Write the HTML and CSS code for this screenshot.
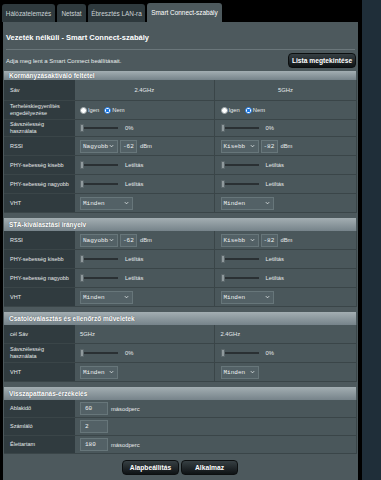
FILE: index.html
```html
<!DOCTYPE html>
<html lang="hu">
<head>
    <meta charset="UTF-8">
    <meta name="viewport" content="width=device-width, initial-scale=1.0">
    <title>Smart Connect-szabály</title>
    <link rel="stylesheet" href="styles.css">
</head>
<body>
<div class="layout">
    <div class="main">
        <div class="tabs">
            <div class="tab t1">Hálózatelemzés</div>
            <div class="tab t2">Netstat</div>
            <div class="tab t3">Ébresztés LAN-ra</div>
            <div class="tab t4 active">Smart Connect-szabály</div>
        </div>

        <div class="panel">
            <div class="title">Vezeték nélküli - Smart Connect-szabály</div>
            <div class="divider"></div>
            <div class="intro">
                <span class="desc">Adja meg lent a Smart Connect beállításait.</span>
                <button class="btn btn-list">Lista megtekintése</button>
            </div>

            <!-- Kormányzás -->
            <div class="section-head first">Kormányzásaktiváló feltétel</div>
            <table class="form">
                <colgroup><col class="c-label"><col class="c-a"><col class="c-b"></colgroup>
                <tr class="tall">
                    <th>Sáv</th>
                    <td class="center">2.4GHz</td>
                    <td class="center">5GHz</td>
                </tr>
                <tr>
                    <th>Terheléskiegyenlítés<br>engedélyezése</th>
                    <td><div class="cell"><span class="radio"></span><span class="rl">Igen</span><span class="radio on"></span><span class="rl">Nem</span></div></td>
                    <td><div class="cell"><span class="radio"></span><span class="rl">Igen</span><span class="radio on"></span><span class="rl">Nem</span></div></td>
                </tr>
                <tr class="short">
                    <th>Sávszélesség<br>használata</th>
                    <td><div class="cell"><span class="slider"><span class="knob"></span></span><span class="after">0%</span></div></td>
                    <td><div class="cell"><span class="slider"><span class="knob"></span></span><span class="after">0%</span></div></td>
                </tr>
                <tr>
                    <th>RSSI</th>
                    <td><div class="cell"><span class="select">Nagyobb<svg class="chev" viewBox="0 0 6 4"><path d="M1 1l2 2 2-2"/></svg></span><span class="field">-62</span><span class="unit">dBm</span></div></td>
                    <td><div class="cell"><span class="select">Kisebb<svg class="chev" viewBox="0 0 6 4"><path d="M1 1l2 2 2-2"/></svg></span><span class="field">-82</span><span class="unit">dBm</span></div></td>
                </tr>
                <tr>
                    <th>PHY-sebesség kisebb</th>
                    <td><div class="cell"><span class="slider"><span class="knob"></span></span><span class="after">Letiltás</span></div></td>
                    <td><div class="cell"><span class="slider"><span class="knob"></span></span><span class="after">Letiltás</span></div></td>
                </tr>
                <tr>
                    <th>PHY-sebesség nagyobb</th>
                    <td><div class="cell"><span class="slider"><span class="knob"></span></span><span class="after">Letiltás</span></div></td>
                    <td><div class="cell"><span class="slider"><span class="knob"></span></span><span class="after">Letiltás</span></div></td>
                </tr>
                <tr>
                    <th>VHT</th>
                    <td><div class="cell"><span class="select wide">Minden<svg class="chev" viewBox="0 0 6 4"><path d="M1 1l2 2 2-2"/></svg></span></div></td>
                    <td><div class="cell"><span class="select wide">Minden<svg class="chev" viewBox="0 0 6 4"><path d="M1 1l2 2 2-2"/></svg></span></div></td>
                </tr>
            </table>

            <!-- STA -->
            <div class="section-head">STA-kiválasztási irányelv</div>
            <table class="form">
                <colgroup><col class="c-label"><col class="c-a"><col class="c-b"></colgroup>
                <tr>
                    <th>RSSI</th>
                    <td><div class="cell"><span class="select">Nagyobb<svg class="chev" viewBox="0 0 6 4"><path d="M1 1l2 2 2-2"/></svg></span><span class="field">-62</span><span class="unit">dBm</span></div></td>
                    <td><div class="cell"><span class="select">Kisebb<svg class="chev" viewBox="0 0 6 4"><path d="M1 1l2 2 2-2"/></svg></span><span class="field">-82</span><span class="unit">dBm</span></div></td>
                </tr>
                <tr>
                    <th>PHY-sebesség kisebb</th>
                    <td><div class="cell"><span class="slider"><span class="knob"></span></span><span class="after">Letiltás</span></div></td>
                    <td><div class="cell"><span class="slider"><span class="knob"></span></span><span class="after">Letiltás</span></div></td>
                </tr>
                <tr>
                    <th>PHY-sebesség nagyobb</th>
                    <td><div class="cell"><span class="slider"><span class="knob"></span></span><span class="after">Letiltás</span></div></td>
                    <td><div class="cell"><span class="slider"><span class="knob"></span></span><span class="after">Letiltás</span></div></td>
                </tr>
                <tr>
                    <th>VHT</th>
                    <td><div class="cell"><span class="select wide">Minden<svg class="chev" viewBox="0 0 6 4"><path d="M1 1l2 2 2-2"/></svg></span></div></td>
                    <td><div class="cell"><span class="select wide">Minden<svg class="chev" viewBox="0 0 6 4"><path d="M1 1l2 2 2-2"/></svg></span></div></td>
                </tr>
            </table>

            <!-- Csatolóválasztás -->
            <div class="section-head">Csatolóválasztás és ellenőrző műveletek</div>
            <table class="form">
                <colgroup><col class="c-label"><col class="c-a"><col class="c-b"></colgroup>
                <tr>
                    <th>cél Sáv</th>
                    <td>5GHz</td>
                    <td>2.4GHz</td>
                </tr>
                <tr>
                    <th>Sávszélesség<br>használata</th>
                    <td><div class="cell"><span class="slider"><span class="knob"></span></span><span class="after">0%</span></div></td>
                    <td><div class="cell"><span class="slider"><span class="knob"></span></span><span class="after">0%</span></div></td>
                </tr>
                <tr>
                    <th>VHT</th>
                    <td><div class="cell"><span class="select">Minden<svg class="chev" viewBox="0 0 6 4"><path d="M1 1l2 2 2-2"/></svg></span></div></td>
                    <td><div class="cell"><span class="select">Minden<svg class="chev" viewBox="0 0 6 4"><path d="M1 1l2 2 2-2"/></svg></span></div></td>
                </tr>
            </table>

            <!-- Visszapattanás -->
            <div class="section-head">Visszapattanás-érzékelés</div>
            <table class="form compact last">
                <colgroup><col class="c-label"><col class="c-rest"></colgroup>
                <tr>
                    <th>Ablakidő</th>
                    <td><div class="cell"><span class="field long">60</span><span class="unit">másodperc</span></div></td>
                </tr>
                <tr>
                    <th>Számláló</th>
                    <td><div class="cell"><span class="field long">2</span></div></td>
                </tr>
                <tr>
                    <th>Élettartam</th>
                    <td><div class="cell"><span class="field long">180</span><span class="unit">másodperc</span></div></td>
                </tr>
            </table>

            <div class="actions">
                <button class="btn btn-action">Alapbeállítás</button>
                <button class="btn btn-action">Alkalmaz</button>
            </div>
        </div>
    </div>
    <div class="side"></div>
</div>
</body>
</html>
```

FILE: styles.css
```css
body { margin: 0; background: #000; font-family: "Liberation Sans", Arial, sans-serif; color: #eef1f2; }
.layout { display: flex; height: 480px; overflow: hidden; }
.main { width: 358px; flex: none; }
.side { flex: 1; margin-left: 4px; background: #1f2e39; }

/* tabs */
.tabs { display: flex; align-items: flex-end; gap: 2px; height: 22px; padding-left: 2px; box-sizing: border-box; }
.tab { height: 18px; display: flex; align-items: center; justify-content: center; background: #2e393d; color: #cdd4d6; font-size: 6.4px; border-radius: 3px 3px 0 0; }
.tab.active { height: 19px; background: #4d595d; color: #fff; }
.t1 { width: 53px; }
.t2 { width: 29px; }
.t3 { width: 57px; }
.t4 { width: 75px; }

/* panel */
.panel { margin-left: 3px; padding: 0 2px 0 1px; background: #4d595d; height: 458px; }
.title { padding: 11px 2px 0; height: 9px; line-height: 9px; font-size: 7.5px; font-weight: bold; color: #fff; }
.divider { margin: 7px 1px 0 2px; height: 1px; background: #6a767a; }
.intro { display: flex; justify-content: space-between; align-items: center; padding: 3px 0 3px 2px; }
.desc { font-size: 6px; color: #e9edee; }

.btn { border: 1px solid #0c0f10; border-radius: 4px; background: linear-gradient(#363f43, #0f1315); color: #fff; font-family: "Liberation Sans", Arial, sans-serif; font-weight: bold; font-size: 6.7px; padding: 0; height: 15px; }
.btn-list { width: 68px; }
.btn-action { width: 57px; }
.actions { display: flex; justify-content: center; gap: 2px; padding-top: 6px; }

/* sections */
.section-head { height: 13px; line-height: 13px; padding-left: 5px; background: linear-gradient(#a3aeb2, #76838a); font-size: 6.5px; font-weight: bold; color: #fff; text-shadow: 0 0 1px #3c4548; }
.section-head.first { height: 9px; line-height: 9px; }

.form { width: 352px; border-collapse: collapse; table-layout: fixed; margin-bottom: 5px; border-bottom: 1px solid #3a4447; }
.form.last { margin-bottom: 0; }
.c-label { width: 71px; }
.c-a { width: 139px; }
.c-b { width: 142px; }
.c-rest { width: 281px; }
.form th { background: #303b3f; text-align: left; font-weight: normal; font-size: 5.5px; line-height: 7px; padding: 0 2px 0 6px; white-space: nowrap; color: #e6eaeb; height: 18px; border-bottom: 1px solid #3a4548; }
.form td { background: #4a575b; padding: 0 5px; font-size: 5.8px; color: #e6eaeb; height: 18px; border-bottom: 1px solid #3a4548; border-right: 1px solid #3a4548; }
.form tr.tall th, .form tr.tall td { height: 20px; }
.form tr.short th, .form tr.short td { height: 16px; }
.form.compact th, .form.compact td { height: 17px; }
.form td.center { text-align: center; }
.form td + td { padding-left: 6px; }

.cell { display: flex; align-items: center; }

/* controls */
.radio { width: 5px; height: 5px; border-radius: 50%; background: #fff; border: 1px solid #9aa3a6; }
.radio.on { border-color: #1a78e6; background: radial-gradient(circle, #1a78e6 1.4px, #fff 1.9px); }
.rl { margin: 0 5px 0 1px; }

.slider { width: 38px; height: 7px; display: flex; align-items: center; background: linear-gradient(#2a3033, #2a3033) center / 100% 2px no-repeat; }
.knob { width: 2px; height: 6px; background: #8f999c; border: 1px solid #5b666a; border-radius: 1px; }
.after { margin-left: 7px; }

.select { width: 38px; height: 13px; box-sizing: border-box; display: flex; align-items: center; justify-content: space-between; padding: 0 3px 0 2px; border: 1px solid #67767a; background: #536166; font-family: "Liberation Mono", monospace; font-size: 6px; color: #eef1f2; }
.select.wide { width: 53px; }
.chev { width: 5px; height: 4px; fill: none; stroke: #e6eaeb; stroke-width: 1; }
.field { width: 17px; height: 13px; box-sizing: border-box; display: flex; align-items: center; padding-left: 2px; margin-left: 2px; border: 1px solid #67767a; background: #536166; font-family: "Liberation Mono", monospace; font-size: 6px; color: #eef1f2; }
.field.long { width: 28px; margin-left: 0; padding-left: 4px; }
.unit { margin-left: 3px; }
```
